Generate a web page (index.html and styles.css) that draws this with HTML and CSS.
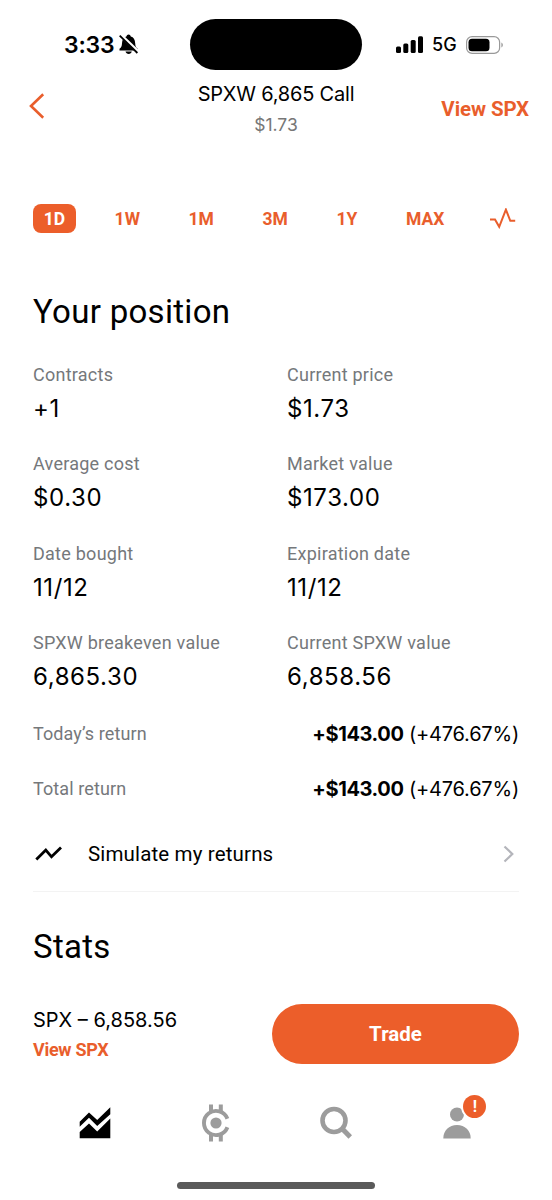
FILE: index.html
```html
<!DOCTYPE html>
<html lang="en">

<head>
    <meta charset="UTF-8">
    <meta name="viewport" content="width=device-width, initial-scale=1.0">
    <link rel="stylesheet" href="styles.css">
    <title>SPXW 6,865 Call</title>
</head>

<body>
    <div class="screen">
        <!-- Phone status bar -->
        <div class="status-bar">
            <div class="status-left">
                <span class="time">3:33</span>
                <svg class="bell" width="20" height="21" viewBox="0 0 20 21">
                    <path d="M.5 16.4v-1.6c2-1.5 2.3-2.6 2.5-5.6C3.2 5.6 4.6 3.3 7.4 2.6 7.7 1.2 8.5.5 9.6.5s1.900.7 2.200 2.100c2.800.7 4.200 3 4.400 6.600.2 3 .5 4.100 2.500 5.600v1.600z" />
                    <path d="M6.5 17.6h6.300c-.4 1.700-1.500 2.400-3.100 2.400s-2.800-.7-3.200-2.400z" />
                    <path d="M1.2.6L19.400 18" stroke="#fff" stroke-width="3.400" />
                    <path d="M.7 1.7L18.4 19" stroke="#000" stroke-width="1.800" />
                </svg>
            </div>
            <div class="island"></div>
            <div class="status-right">
                <svg width="28" height="18" viewBox="0 0 28 18">
                    <rect x="0" y="10.5" width="5" height="6.5" rx="1.5" />
                    <rect x="7.3" y="7.6" width="5" height="9.4" rx="1.5" />
                    <rect x="14.7" y="4" width="5" height="13" rx="1.5" />
                    <rect x="22" y="0.3" width="5" height="16.7" rx="1.5" />
                </svg>
                <span class="network">5G</span>
                <svg width="38" height="18" viewBox="0 0 38 18">
                    <rect x=".6" y=".6" width="33" height="16.8" rx="5.5" fill="none" stroke="#999" stroke-width="1.2" />
                    <rect x="2.5" y="2.7" width="21" height="12.6" rx="3.5" />
                    <path d="M35.4 6.5c1.9.8 1.9 4.2 0 5z" fill="#999" />
                </svg>
            </div>
        </div>

        <header class="header">
            <svg class="back" width="16" height="26" viewBox="0 0 16 26">
                <path d="M14.2 1.3L2 13l12.2 11.7" />
            </svg>
            <div class="header-title">
                <h1>SPXW 6,865 Call</h1>
                <p>$1.73</p>
            </div>
            <a class="header-link">View SPX</a>
        </header>

        <!-- Chart range -->
        <nav class="ranges">
            <span class="range active">1D</span>
            <span class="range">1W</span>
            <span class="range">1M</span>
            <span class="range">3M</span>
            <span class="range">1Y</span>
            <span class="range">MAX</span>
            <svg class="pulse" width="26" height="21" viewBox="0 0 26 21">
                <path d="M0 11.4h5l4.2 7.4L15.9 1.6l4.4 11.2h4.9" />
            </svg>
        </nav>

        <main class="content">
            <h2>Your position</h2>

            <div class="position">
                <div class="item">
                    <span class="label">Contracts</span>
                    <span class="value">+1</span>
                </div>
                <div class="item">
                    <span class="label">Current price</span>
                    <span class="value">$1.73</span>
                </div>
                <div class="item">
                    <span class="label">Average cost</span>
                    <span class="value">$0.30</span>
                </div>
                <div class="item">
                    <span class="label">Market value</span>
                    <span class="value">$173.00</span>
                </div>
                <div class="item">
                    <span class="label">Date bought</span>
                    <span class="value">11/12</span>
                </div>
                <div class="item">
                    <span class="label">Expiration date</span>
                    <span class="value">11/12</span>
                </div>
                <div class="item">
                    <span class="label">SPXW breakeven value</span>
                    <span class="value">6,865.30</span>
                </div>
                <div class="item">
                    <span class="label">Current SPXW value</span>
                    <span class="value">6,858.56</span>
                </div>
            </div>

            <div class="return-row">
                <span class="label">Today’s return</span>
                <span class="return"><b>+$143.00</b> (+476.67%)</span>
            </div>
            <div class="return-row">
                <span class="label">Total return</span>
                <span class="return"><b>+$143.00</b> (+476.67%)</span>
            </div>

            <div class="simulate">
                <svg class="line-icon" width="28" height="16" viewBox="0 0 28 16">
                    <path d="M1.3 13.5L10.8 4l5.7 6.8L26 1.5" />
                </svg>
                <span>Simulate my returns</span>
                <svg class="chevron" width="12" height="18" viewBox="0 0 12 18">
                    <path d="M1.5 1.5L9.3 9l-7.8 7.5" />
                </svg>
            </div>

            <h2 class="stats">Stats</h2>
        </main>

        <div class="trade-bar">
            <div class="quote">
                <p>SPX – 6,858.56</p>
                <a>View SPX</a>
            </div>
            <button class="btn">Trade</button>
        </div>

        <!-- Bottom tabs -->
        <nav class="tabs">
            <div class="tab">
                <svg width="32" height="32" viewBox="0 0 32 32" fill="#000">
                    <path d="M.7 14.7L10 5.500l8.200 7.500L31.300.3v6.900L18.200 19 10 10.700.7 19.700z" />
                    <path d="M.7 25L10 16.500l8.200 8L31.300 11.500v19.800H.7z" />
                </svg>
            </div>
            <div class="tab">
                <svg width="30" height="38" viewBox="0 0 30 38" fill="#9c9c9c">
                    <path d="M26.4 14.800A12.100 12.100 0 1 0 26.400 23.200" fill="none" stroke="#9c9c9c" stroke-width="3.900" />
                    <circle cx="15" cy="19" r="5.6" />
                    <path d="M8 .5h4v8H8zM17.800.5h4v8h-4zM8 29.5h4v8H8zM17.800 29.5h4v8h-4z" />
                </svg>
            </div>
            <div class="tab">
                <svg width="32" height="34" viewBox="0 0 32 34" fill="none" stroke="#9c9c9c">
                    <circle cx="14" cy="14.5" r="11.5" stroke-width="4.6" />
                    <path d="M22 22.5l8.3 8.5" stroke-width="5" />
                </svg>
            </div>
            <div class="tab profile">
                <svg width="28" height="32" viewBox="0 0 28 32" fill="#9c9c9c">
                    <circle cx="14" cy="7.5" r="7" />
                    <path d="M.3 31.5C.3 23.5 6 18 14 18s13.7 5.5 13.7 13.5z" />
                </svg>
                <span class="badge">!</span>
            </div>
        </nav>

        <div class="home-indicator"></div>
    </div>
</body>

</html>
```

FILE: styles.css
```css
* {
  box-sizing: border-box;
}

body {
  margin: 0;
  background-color: #fff;
  color: #000;
  font-family: Roboto, "Liberation Sans", sans-serif;
}

h1, h2, p {
  margin: 0;
  font-weight: 400;
}

svg {
  display: block;
  flex: none;
}

.screen {
  display: flex;
  flex-direction: column;
  width: 552px;
  height: 1200px;
  overflow: hidden;
}

/* status bar */
.status-bar {
  display: grid;
  grid-template-columns: 190px 172px 190px;
  align-items: center;
  height: 70px;
  padding-top: 19px;
}

.status-left,
.status-right {
  display: flex;
  align-items: center;
  font-family: Inter, sans-serif;
}

.status-left {
  padding-left: 64px;
}

.time {
  font-size: 23px;
  font-weight: 600;
  letter-spacing: -0.2px;
}

.bell {
  margin-left: 5px;
}

.island {
  height: 51px;
  border-radius: 26px;
  background-color: #000;
}

.status-right {
  padding-left: 34px;
}

.network {
  width: 34px;
  margin-left: 8px;
  font-size: 18px;
  font-weight: 500;
}

/* header */
.header {
  display: grid;
  grid-template-columns: 150px 1fr 150px;
  height: 66px;
  padding: 10px 23px 0 29px;
}

.back {
  margin-top: 13px;
}

.back path {
  fill: none;
  stroke: #e95e2c;
  stroke-width: 2.6;
}

.header-title {
  margin-left: -6px;
  font-family: Inter, sans-serif;
  text-align: center;
}

.header-title h1 {
  font-size: 20px;
  line-height: 29px;
  letter-spacing: -0.2px;
  white-space: nowrap;
}

.header-title p {
  color: #777;
  font-size: 17.5px;
  line-height: 32px;
}

.header-link {
  margin-top: 15px;
  color: #e95e2c;
  font-size: 20.5px;
  font-weight: 700;
  line-height: 28px;
  letter-spacing: -0.1px;
  text-align: right;
}

/* chart ranges */
.ranges {
  display: flex;
  align-items: center;
  justify-content: space-between;
  height: 29px;
  margin: 68px 26px 0 33px;
}

.range {
  padding: 0 10px;
  color: #e95e2c;
  font-size: 17.5px;
  font-weight: 700;
  line-height: 30px;
}

.active {
  width: 43px;
  height: 29px;
  padding: 0;
  border-radius: 8px;
  background-color: #ec5e2a;
  color: #fff;
  text-align: center;
}

.pulse {
  margin: 0 10px 0 7px;
}

.pulse path {
  fill: none;
  stroke: #e95e2c;
  stroke-width: 2;
}

/* position */
.content {
  height: 760px;
  padding: 0 33px;
}

h2 {
  margin-top: 58px;
  font-size: 33px;
  line-height: 42px;
  letter-spacing: 0.3px;
}

.position {
  display: grid;
  grid-template-columns: 254px 1fr;
  row-gap: 27.25px;
  margin: 30px 0 14px;
}

.item {
  display: flex;
  flex-direction: column;
  height: 62px;
}

.label {
  color: #75787b;
  font-size: 18px;
  line-height: 24px;
  letter-spacing: 0.25px;
}

.value {
  margin-top: 6px;
  font-family: Inter, sans-serif;
  font-size: 24px;
  line-height: 31px;
  letter-spacing: 0.6px;
}

.return-row {
  display: flex;
  align-items: center;
  justify-content: space-between;
  height: 54.5px;
}

.return-row .label {
  letter-spacing: 0.1px;
}

.return {
  font-family: Inter, sans-serif;
  font-size: 20px;
  letter-spacing: -0.2px;
}

.return b {
  letter-spacing: -0.4px;
}

.simulate {
  display: flex;
  align-items: center;
  height: 76px;
  border-bottom: 1px solid #f3f3f3;
  font-size: 20.5px;
  letter-spacing: 0.15px;
}

.simulate span {
  margin-top: 2px;
  margin-left: 25px;
}

.line-icon {
  margin-top: 1px;
  margin-left: 2px;
}

.line-icon path {
  fill: none;
  stroke: #000;
  stroke-width: 2.8;
}

.chevron {
  margin-top: 2px;
  margin-left: auto;
  margin-right: 4px;
}

.chevron path {
  fill: none;
  stroke: #b4b5bb;
  stroke-width: 2.2;
}

.stats {
  margin-top: 34px;
}

/* trade bar */
.trade-bar {
  display: flex;
  justify-content: space-between;
  margin-top: 11px;
  padding: 0 33px;
}

.quote p {
  padding-top: 1px;
  font-family: Inter, sans-serif;
  font-size: 20px;
  line-height: 30px;
}

.quote a {
  display: block;
  color: #e95e2c;
  font-size: 18px;
  font-weight: 700;
  line-height: 30px;
  letter-spacing: -0.3px;
}

.btn {
  width: 247px;
  height: 60px;
  border: none;
  border-radius: 30px;
  background-color: #ec5e2a;
  color: #fff;
  font-family: inherit;
  font-size: 20.5px;
  font-weight: 700;
}

/* bottom tabs */
.tabs {
  display: grid;
  grid-template-columns: repeat(4, 120.4px);
  justify-content: center;
  height: 60px;
  margin-top: 28px;
}

.tab {
  display: flex;
  align-items: center;
  justify-content: center;
}

.profile {
  position: relative;
}

.badge {
  position: absolute;
  top: 2px;
  left: 67px;
  width: 23px;
  height: 23px;
  border-radius: 50%;
  background-color: #ec5e2a;
  box-shadow: 0 0 0 2px #fff;
  color: #fff;
  font-size: 16px;
  font-weight: 700;
  line-height: 23px;
  text-align: center;
}

.home-indicator {
  width: 198px;
  height: 7px;
  margin: 29px auto 0;
  border-radius: 4px;
  background-color: #5a5a5a;
}
```
